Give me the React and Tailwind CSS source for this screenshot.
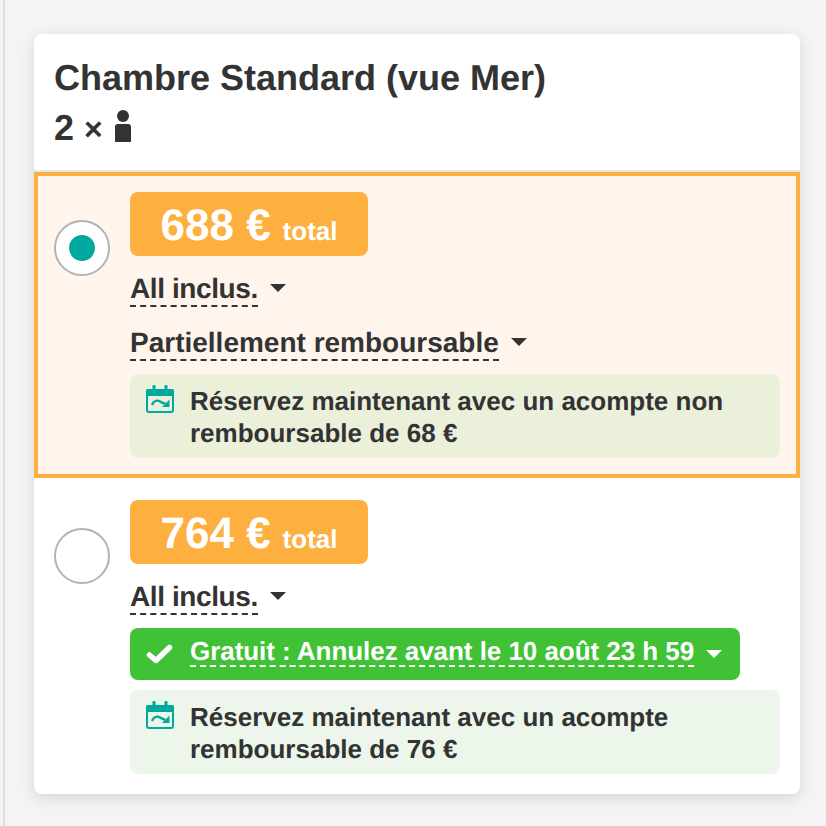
import React from 'react';

const CalendarIcon = () => (
  <svg width="28" height="28" viewBox="0 0 28 28" className="shrink-0 -mt-[1px]">
    <rect x="6.500" y="0" width="3" height="6" rx="1.200" fill="#00a99d" />
    <rect x="18.500" y="0" width="3" height="6" rx="1.200" fill="#00a99d" />
    <path d="M2 4h24a2 2 0 0 1 2 2v5H0V6a2 2 0 0 1 2-2z" fill="#00a99d" />
    <rect x="1" y="5" width="26" height="22" rx="2" fill="none" stroke="#00a99d" strokeWidth="2" />
    <path d="M6 20c1.500-4 5-5.500 8-3.500c2 1.300 3.500 2.200 5.500 2" fill="none" stroke="#00a99d" strokeWidth="2.400" />
    <path d="M23.500 14.500v7.500h-7.500z" fill="#00a99d" />
  </svg>
);

const Caret = ({ color = 'border-t-[#333333]' }) => (
  <span className={`inline-block w-0 h-0 border-x-[8px] border-x-transparent border-t-[8px] ${color}`} />
);

const PriceBadge = ({ amount }) => (
  <div className="w-[238px] h-16 rounded-lg bg-[#fdb040] text-white font-bold flex items-baseline justify-center leading-[68px]">
    <span className="text-[44px]">{amount} €</span>
    <span className="text-[26px] ml-3">total</span>
  </div>
);

const Dropdown = ({ label, tight }) => (
  <div className="flex items-center h-8 text-[#333333] text-[28px] font-bold">
    <span className={`border-b-2 border-dashed border-[#333333] leading-[36px] h-[36px] mt-[1px] ${tight ? 'tracking-[-0.4px]' : ''}`}>{label}</span>
    <span className="ml-3 flex"><Caret /></span>
  </div>
);

const Note = ({ bg, children }) => (
  <div className={`flex gap-4 rounded-lg px-4 pt-[11px] h-[84px] ${bg}`}>
    <div className="pt-px"><CalendarIcon /></div>
    <p className="text-[26px] leading-8 font-bold text-[#333333]">{children}</p>
  </div>
);

const Radio = ({ checked }) => (
  <div className="w-14 h-14 shrink-0 rounded-full border-2 border-[#b3b3b3] bg-white flex items-center justify-center">
    {checked && <div className="w-[26px] h-[26px] rounded-full bg-[#00a99d]" />}
  </div>
);

export default function App() {
  return (
    <div
      className="w-[826px] h-[826px] overflow-hidden bg-[#f4f4f4] pl-[34px] pt-[34px] relative [text-rendering:geometricPrecision]"
      style={{ fontFamily: '"Liberation Sans", Arial, sans-serif' }}
    >
      <div className="absolute left-[3px] top-0 bottom-0 w-[2px] bg-[#dddddd]" />
      <div className="w-[766px] h-[760px] bg-white rounded-lg shadow-[0_4px_16px_rgba(0,0,0,0.12)] overflow-hidden">
        <div className="h-[136px] pl-5 pt-5 text-[#333333] font-bold">
          <h1 className="text-[36px] leading-[48px]">Chambre Standard (vue Mer)</h1>
          <div className="flex items-end text-[36px] leading-[44px] h-[48px]">
            <span>2</span>
            <span className="text-[32px] ml-[10px] leading-[42px]">×</span>
            <svg width="16" height="32" viewBox="0 0 16 32" className="ml-[12px] mb-[8px]">
              <circle cx="8" cy="6" r="6" fill="#333333" />
              <path d="M3 14h10a3 3 0 0 1 3 3v15H0V17a3 3 0 0 1 3-3z" fill="#333333" />
            </svg>
          </div>
        </div>

        <div className="mt-0 border-t-2 border-[#e6e6e6]">
          <div className="h-[306px] border-4 border-[#fdb040] bg-[#fff5ec] flex pl-4 pr-4 pt-4 gap-5">
            <div className="pt-[28px]"><Radio checked /></div>
            <div className="flex-1">
              <PriceBadge amount="688" />
              <div className="mt-4"><Dropdown label="All inclus." tight /></div>
              <div className="mt-[22px]"><Dropdown label="Partiellement remboursable" /></div>
              <div className="mt-4">
                <Note bg="bg-[#ebf0db]">
                  Réservez maintenant avec un acompte non remboursable de 68 €
                </Note>
              </div>
            </div>
          </div>

          <div className="flex pl-5 pr-5 pt-[22px] gap-5">
            <div className="pt-[28px]"><Radio /></div>
            <div className="flex-1">
              <PriceBadge amount="764" />
              <div className="mt-4"><Dropdown label="All inclus." tight /></div>
              <div className="mt-4 w-[610px] h-[52px] rounded-lg bg-[#41c136] flex items-center text-white text-[26px] font-bold pl-4">
                <svg width="28" height="22" viewBox="0 0 28 22" className="shrink-0">
                  <path d="M3.500 12l6.500 5.500L23.500 4.500" fill="none" stroke="#fff" strokeWidth="5.500" strokeLinecap="round" strokeLinejoin="round" />
                </svg>
                <span className="ml-[16px] border-b-2 border-dashed border-white h-[32px] leading-[32px] mb-[6px] whitespace-nowrap tracking-[-0.05px]">Gratuit : Annulez avant le 10 août 23 h 59</span>
                <span className="ml-3 flex"><Caret color="border-t-white" /></span>
              </div>
              <div className="mt-[10px]">
                <Note bg="bg-[#ecf6ea]">
                  Réservez maintenant avec un acompte remboursable de 76 €
                </Note>
              </div>
            </div>
          </div>
        </div>
      </div>
    </div>
  );
}
